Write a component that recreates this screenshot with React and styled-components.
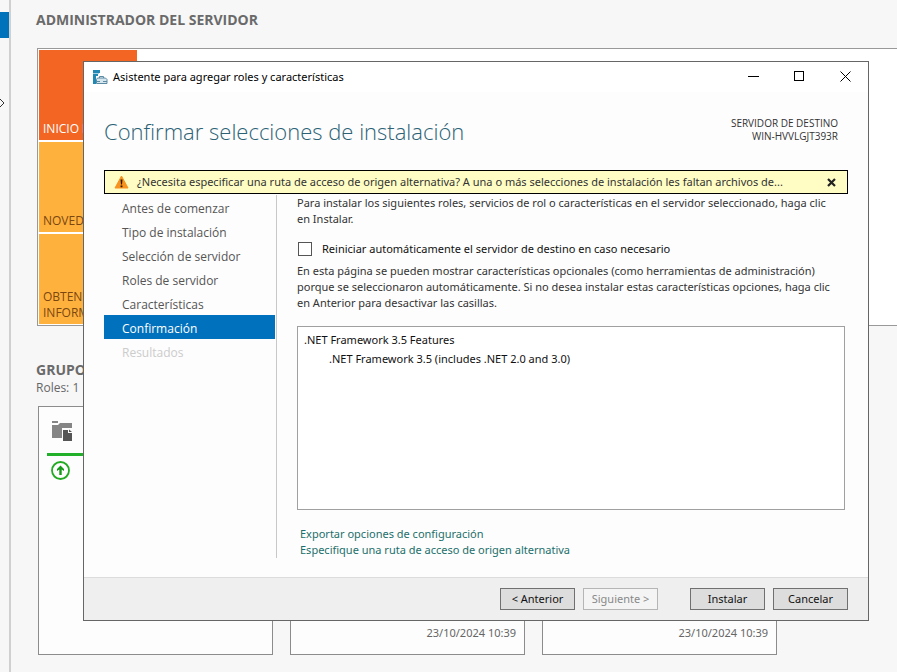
import React from "react";
import styled, { createGlobalStyle } from "styled-components";

const GlobalStyle = createGlobalStyle`
  * { box-sizing: border-box; }
  body {
    margin: 0;
    background: #f7f7f7;
    font-family: "Noto Sans", "Open Sans", sans-serif;
    font-size: 11px;
    line-height: 16px;
    color: #333;
    overflow: hidden;
  }
  button, input { font: inherit; color: inherit; }
  h1, h2, p, ul { margin: 0; padding: 0; }
  ul { list-style: none; }
`;

/* ---------- dashboard behind the wizard ---------- */

const Page = styled.div`
  position: relative;
  display: flex;
  min-height: 100vh;
`;

const Rail = styled.aside`
  flex: 0 0 11px;
  padding-top: 12px;
  border-right: 2px solid #d0d0d0;
`;

const RailItem = styled.button`
  display: block;
  width: 100%;
  height: 26px;
  padding: 0;
  border: 0;
  background: #0072bc;
`;

const RailToggle = styled.button`
  display: block;
  margin-top: 60px;
  padding: 0;
  border: 0;
  background: none;
  svg { display: block; }
`;

const Dashboard = styled.main`
  flex: 1;
  min-width: 0;
  padding: 12px 0 17px 25px;
`;

const SectionTitle = styled.h2`
  font-family: "Open Sans", "Noto Sans", sans-serif;
  font-size: 14px;
  line-height: 16px;
  font-weight: 700;
  color: #6a6a6a;
  white-space: nowrap;
`;

const Welcome = styled.section`
  margin: 20px 0 36px 1px;
  padding: 1px;
  border: 1px solid #999;
  border-right: 0;
  background: #fff;
`;

const Tiles = styled.div`
  display: grid;
  grid-auto-rows: 90px;
  gap: 2px;
  width: 98px;
`;

const Tile = styled.button`
  display: flex;
  align-items: flex-end;
  padding: 3px 4px;
  border: 0;
  font-size: 12px;
  text-align: left;
  background: ${(p) => (p.$active ? "#f26522" : "#ffb13d")};
  color: ${(p) => (p.$active ? "#fff" : "#7a4712")};
`;

const TileText = styled.span`
  font-family: "Open Sans", "Noto Sans", sans-serif;
  white-space: pre;
`;

const RolesCount = styled.p`
  margin-top: 2px;
  font-size: 12px;
  font-family: "Open Sans", "Noto Sans", sans-serif;
  color: #666;
`;

const Cards = styled.div`
  display: flex;
  gap: 17px;
  margin: 10px 0 0 2px;
`;

const Card = styled.article`
  display: flex;
  flex-direction: column;
  flex: 0 0 235px;
  height: 249px;
  padding: 14px 8px 13px;
  border: 1px solid #8c8c8c;
  background: #fdfdfd;
  color: #666;
`;

const CardIcon = styled.div`
  padding-left: 4px;
  svg { display: block; }
`;

const StatusBar = styled.div`
  height: 3px;
  margin: 11px 0 5px;
  background: #22b02a;
`;

const CardDate = styled.time`
  margin-top: auto;
  text-align: right;
`;

/* ---------- wizard window ---------- */

const Wizard = styled.div`
  position: absolute;
  top: 61px;
  left: 83px;
  right: 28px;
  border: 1px solid #666;
  background: #fdfdfd;
`;

const TitleBar = styled.header`
  display: flex;
  align-items: center;
  height: 30px;
  padding-left: 9px;
  background: #fff;
  color: #000;
`;

const WindowTitle = styled.span`
  flex: 1;
  margin-left: 5px;
`;

const WindowButton = styled.button`
  display: flex;
  align-items: center;
  align-self: flex-start;
  justify-content: center;
  width: 46px;
  height: 28px;
  padding: 0;
  border: 0;
  background: none;
`;

const Header = styled.div`
  display: flex;
  justify-content: space-between;
  height: 78px;
  padding: 23px 30px 0 20px;
`;

const Heading = styled.h1`
  font-family: "Open Sans", "Noto Sans", sans-serif;
  font-size: 22px;
  line-height: 32px;
  font-weight: 300;
  color: #2b6275;
  white-space: nowrap;
`;

const Target = styled.p`
  padding-top: 2px;
  font-family: "Open Sans", "Noto Sans", sans-serif;
  font-size: 10px;
  line-height: 13px;
  text-align: right;
`;

const Banner = styled.div`
  display: flex;
  align-items: center;
  height: 24px;
  margin: 0 20px;
  padding: 0 9px;
  border: 1px solid #000;
  background: #fffdc4;
`;

const BannerText = styled.span`
  flex: 1;
  min-width: 0;
  margin-left: 8px;
  white-space: nowrap;
`;

const BannerClose = styled.button`
  display: flex;
  padding: 2px;
  border: 0;
  background: none;
`;

const Body = styled.div`
  display: flex;
  padding: 1px 23px 19px 20px;
`;

const Steps = styled.nav`
  flex: 0 0 173px;
  min-height: 362px;
  padding-right: 1px;
  border-right: 1px solid #c8c8c8;
`;

const Step = styled.button`
  display: block;
  width: 100%;
  height: 24px;
  padding: 2px 18px 0;
  border: 0;
  font-family: "Open Sans", "Noto Sans", sans-serif;
  font-size: 12px;
  line-height: 24px;
  text-align: left;
  background: ${(p) => (p.$current ? "#0071bc" : "none")};
  color: ${(p) => (p.$current ? "#fff" : "#555")};
  &:disabled { color: #ccc; }
`;

const Content = styled.div`
  flex: 1;
  min-width: 0;
  margin-left: 20px;
`;

const Restart = styled.label`
  display: flex;
  align-items: center;
  gap: 10px;
  margin: 14px 0 6px;
  padding-left: 1px;
  color: #111;
`;

const CheckBox = styled.input`
  appearance: none;
  width: 14px;
  height: 14px;
  margin: 0;
  border: 1px solid #555;
  background: #fff;
`;

const Selections = styled.ul`
  height: 184px;
  margin: 15px 0 16px;
  padding: 3px 6px;
  border: 1px solid #a0a0a0;
  background: #fff;
  color: #111;
`;

const Selection = styled.li`
  padding-left: ${(p) => (p.$nested ? 25 : 0)}px;
  line-height: 19px;
`;

const Links = styled.div`
  display: flex;
  flex-direction: column;
  align-items: flex-start;
  padding-left: 3px;
  a { color: #1c6f6c; text-decoration: none; }
`;

const Footer = styled.footer`
  display: flex;
  justify-content: flex-end;
  gap: 8px;
  padding: 10px 20px;
  border-top: 1px solid #dcdcdc;
  background: #efefef;
`;

const Action = styled.button`
  width: 75px;
  height: 22px;
  padding: 0;
  border: 1px solid #707070;
  background: #dddddd;
  color: #111;
  white-space: nowrap;
  &:disabled { border-color: #b5b5b5; background: #f4f4f4; color: #888; }
`;

const ActionGroup = styled.div`
  display: flex;
  gap: 8px;
  margin-right: 24px;
`;

const steps = [
  "Antes de comenzar",
  "Tipo de instalación",
  "Selección de servidor",
  "Roles de servidor",
  "Características",
  "Confirmación",
  "Resultados",
];

function WizardIcon() {
  return (
    <svg width="15" height="15" viewBox="0 0 15 15" aria-hidden="true">
      <path d="M0 0h7v3H0z M0 4h5v2H3v8H0z" fill="#2188b4" />
      <path d="M0 3h6v1H0z" fill="#9fd0e4" />
      <path d="M6.500 8V6.500h4V8" fill="none" stroke="#5b8ba3" />
      <path d="M3.500 9.500l1-1.500h8l1.500 1.500v4H3.500z" fill="#d5e6ee" stroke="#5b8ba3" />
      <path d="M4 11.500h3M10 11.500h4" stroke="#5b8ba3" />
    </svg>
  );
}

function FolderIcon() {
  return (
    <svg width="22" height="21" viewBox="-1 0 22 21" aria-hidden="true">
      <path d="M0 0h6v2H0zM0 4h6l2-2h12v5H10v10H0z" fill="#858585" />
      <path d="M11 9h5v3h4v8h-9z" fill="#555" />
      <path d="M17 8.500l3 2.500h-3z" fill="#555" />
    </svg>
  );
}

function OnlineIcon() {
  return (
    <svg width="19" height="19" viewBox="0 0 19 19" aria-hidden="true">
      <circle cx="9.500" cy="9.500" r="8.500" fill="#fff" stroke="#22ab22" strokeWidth="1.800" />
      <path d="M9.500 4.500L6 8v2l2.300-1.500V14h2.400V8.500L13 10V8z" fill="#149a18" />
    </svg>
  );
}

function WarningIcon() {
  return (
    <svg width="15" height="14" viewBox="0 0 15 14" aria-hidden="true">
      <path d="M7.500 1L14 13H1z" fill="#f7931e" stroke="#f7931e" strokeLinejoin="round" />
      <path d="M6.500 4.500h2L8 9.500H7zM6.600 10.500h1.800v1.700H6.600z" fill="#2b1a00" />
    </svg>
  );
}

export default function App() {
  return (
    <Page>
      <GlobalStyle />
      <Rail>
        <RailItem aria-label="Panel" />
        <RailToggle aria-label="Expandir">
          <svg width="5" height="10" viewBox="0 0 5 10">
            <path d="M0 1l4 4-4 4" fill="none" stroke="#333" />
          </svg>
        </RailToggle>
      </Rail>
      <Dashboard>
        <SectionTitle>ADMINISTRADOR DEL SERVIDOR</SectionTitle>
        <Welcome>
          <Tiles>
            <Tile $active><TileText>INICIO R</TileText></Tile>
            <Tile><TileText>NOVED</TileText></Tile>
            <Tile><TileText>{"OBTENE\nINFORM"}</TileText></Tile>
          </Tiles>
        </Welcome>
        <SectionTitle>GRUPO</SectionTitle>
        <RolesCount>Roles: 1</RolesCount>
        <Cards>
          <Card>
            <CardIcon><FolderIcon /></CardIcon>
            <StatusBar />
            <CardIcon><OnlineIcon /></CardIcon>
          </Card>
          <Card><CardDate>23/10/2024 10:39</CardDate></Card>
          <Card><CardDate>23/10/2024 10:39</CardDate></Card>
        </Cards>
      </Dashboard>

      <Wizard role="dialog" aria-label="Asistente para agregar roles y características">
        <TitleBar>
          <WizardIcon />
          <WindowTitle>Asistente para agregar roles y características</WindowTitle>
          <WindowButton aria-label="Minimizar">
            <svg width="11" height="11"><path d="M0 5.500h11" stroke="#000" /></svg>
          </WindowButton>
          <WindowButton aria-label="Maximizar">
            <svg width="11" height="11"><rect x="0.500" y="0.500" width="9" height="9" fill="none" stroke="#000" /></svg>
          </WindowButton>
          <WindowButton aria-label="Cerrar">
            <svg width="11" height="11"><path d="M0.500 0.500l10 10M10.500 0.500l-10 10" stroke="#000" /></svg>
          </WindowButton>
        </TitleBar>
        <Header>
          <Heading>Confirmar selecciones de instalación</Heading>
          <Target>SERVIDOR DE DESTINO<br />WIN-HVVLGJT393R</Target>
        </Header>
        <Banner role="alert">
          <WarningIcon />
          <BannerText>¿Necesita especificar una ruta de acceso de origen alternativa? A una o más selecciones de instalación les faltan archivos de...</BannerText>
          <BannerClose aria-label="Cerrar aviso">
            <svg width="9" height="9"><path d="M1 1l7 7M8 1L1 8" stroke="#222" strokeWidth="2.200" /></svg>
          </BannerClose>
        </Banner>
        <Body>
          <Steps>
            {steps.map((name) => (
              <Step key={name} $current={name === "Confirmación"} disabled={name === "Resultados"}>
                {name}
              </Step>
            ))}
          </Steps>
          <Content>
            <p>
              Para instalar los siguientes roles, servicios de rol o características en el servidor seleccionado, haga clic
              <br />
              en Instalar.
            </p>
            <Restart>
              <CheckBox type="checkbox" />
              Reiniciar automáticamente el servidor de destino en caso necesario
            </Restart>
            <p>En esta página se pueden mostrar características opcionales (como herramientas de administración) porque se seleccionaron automáticamente. Si no desea instalar estas características opciones, haga clic en Anterior para desactivar las casillas.</p>
            <Selections>
              <Selection>.NET Framework 3.5 Features</Selection>
              <Selection $nested>.NET Framework 3.5 (includes .NET 2.0 and 3.0)</Selection>
            </Selections>
            <Links>
              <a href="#exportar">Exportar opciones de configuración</a>
              <a href="#ruta">Especifique una ruta de acceso de origen alternativa</a>
            </Links>
          </Content>
        </Body>
        <Footer>
          <ActionGroup>
            <Action>&lt; Anterior</Action>
            <Action disabled>Siguiente &gt;</Action>
          </ActionGroup>
          <Action>Instalar</Action>
          <Action>Cancelar</Action>
        </Footer>
      </Wizard>
    </Page>
  );
}
